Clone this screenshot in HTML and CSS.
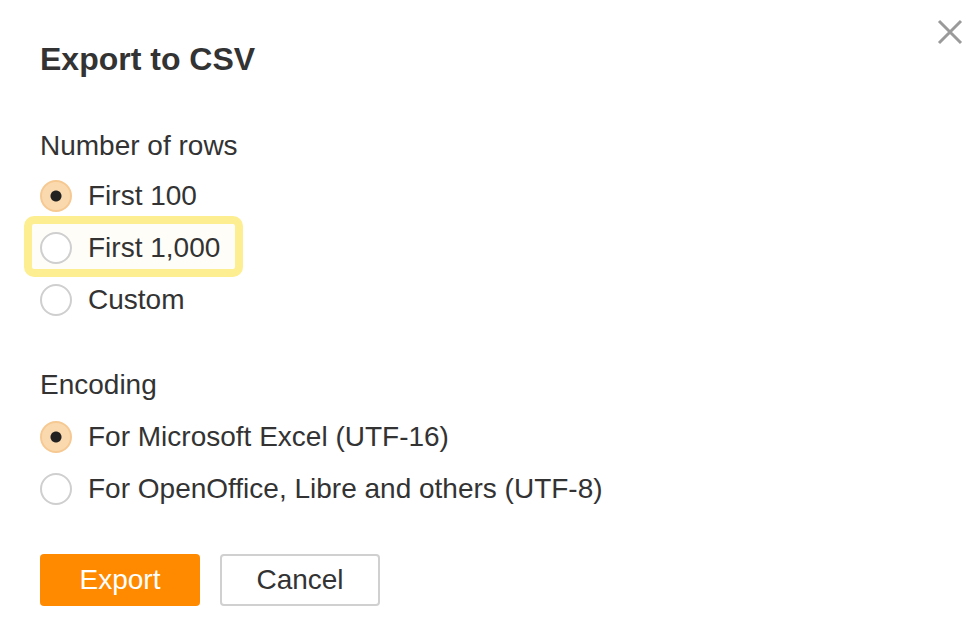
FILE: index.html
```html
<!DOCTYPE html>
<html lang="en">
<head>
    <meta charset="UTF-8">
    <meta name="viewport" content="width=device-width, initial-scale=1.0">
    <title>Export to CSV</title>
    <link rel="stylesheet" href="styles.css">
</head>
<body>

<div class="dialog">
    <!-- Close button -->
    <button type="button" class="closeBtn" aria-label="Close">
        <svg width="26" height="26" viewBox="0 0 26 26">
            <path d="M2 2 L24 24 M24 2 L2 24" stroke="#9a9a9a" stroke-width="3" fill="none"/>
        </svg>
    </button>

    <h1 class="title">Export to CSV</h1>

    <form>
        <div class="group">
            <div class="groupLabel">Number of rows</div>
            <label class="option"><input type="radio" name="rows" checked> First 100</label>
            <label class="option highlight"><input type="radio" name="rows"> First 1,000</label>
            <label class="option"><input type="radio" name="rows"> Custom</label>
        </div>

        <div class="group">
            <div class="groupLabel groupLabelEnc">Encoding</div>
            <label class="option"><input type="radio" name="enc" checked> For Microsoft Excel (UTF-16)</label>
            <label class="option"><input type="radio" name="enc"> For OpenOffice, Libre and others (UTF-8)</label>
        </div>

        <!-- Buttons -->
        <div class="actions">
            <button type="button" class="btn btnPrimary">Export</button>
            <button type="button" class="btn btnSecondary">Cancel</button>
        </div>
    </form>
</div>

</body>
</html>
```

FILE: styles.css
```css
body {
    margin: 0;
    padding: 0;
    background-color: #fff;
    color: #333;
    font-family: "Liberation Sans", Arial, sans-serif;
    font-size: 28px;
}

.dialog {
    position: relative;
    padding: 39px 40px 0 40px;
}

.closeBtn {
    position: absolute;
    top: 19px;
    right: 15px;
    padding: 0;
    border: none;
    background: none;
    cursor: pointer;
    line-height: 0;
}

.title {
    margin: 0 0 47px 0;
    font-size: 32px;
    line-height: 40px;
    font-weight: bold;
    color: #333;
}

.group {
    display: flex;
    flex-direction: column;
    align-items: flex-start;
    margin-bottom: 39px;
}

.groupLabel {
    line-height: 40px;
    margin-bottom: 4px;
}

.groupLabelEnc {
    margin-bottom: 6px;
}

.option {
    position: relative;
    display: flex;
    align-items: center;
    gap: 16px;
    height: 52px;
    line-height: 40px;
}

.option input {
    appearance: none;
    -webkit-appearance: none;
    width: 32px;
    height: 32px;
    margin: 0;
    border: 2px solid #cfcfcf;
    border-radius: 50%;
    background-color: #fff;
    flex-shrink: 0;
}

.option input:checked {
    border-color: #f6c993;
    background: radial-gradient(circle, #222 5px, #fbd9ae 6px);
}

/* yellow annotation box around the row */
.highlight::before {
    content: "";
    position: absolute;
    top: -6px;
    bottom: -3px;
    left: -16px;
    right: -23px;
    border: 8px solid #fdee92;
    border-radius: 10px;
    background-color: #fffdf8;
    z-index: -1;
}

.highlight {
    z-index: 0;
}

.actions {
    display: flex;
    gap: 20px;
}

.btn {
    width: 160px;
    height: 52px;
    font-family: "Liberation Sans", Arial, sans-serif;
    font-size: 28px;
    border-radius: 4px;
    cursor: pointer;
    padding: 0;
}

.btnPrimary {
    background-color: #ff8a00;
    color: #fff;
    border: none;
}

.btnSecondary {
    background-color: #fff;
    color: #333;
    border: 2px solid #d0d0d0;
}
```
